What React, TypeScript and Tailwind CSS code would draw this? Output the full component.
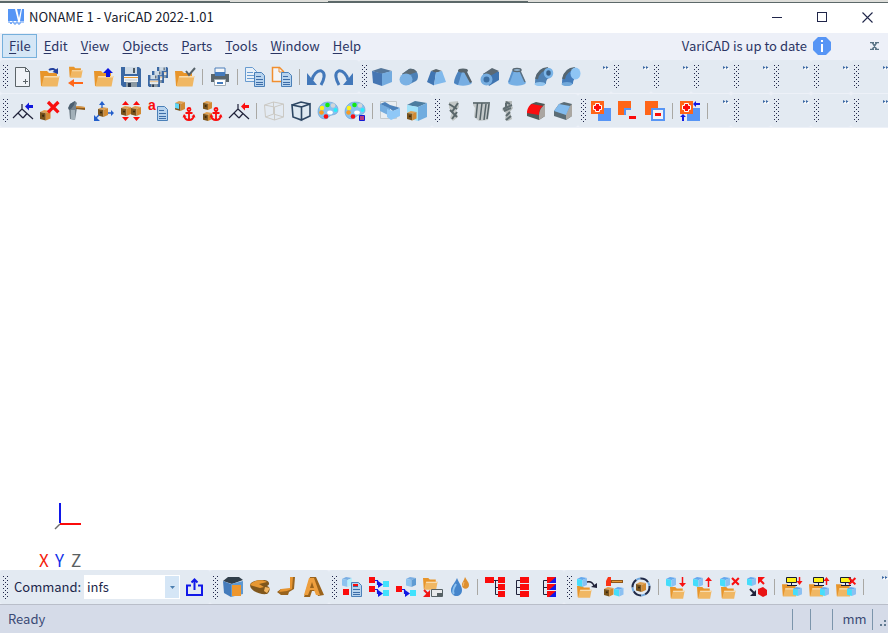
import type { ReactNode } from "react";

function Svg({ children, size = 20 }: { children: ReactNode; size?: number }) {
  return (
    <svg width={size} height={size} viewBox="0 0 20 20" fill="none" aria-hidden="true" className="shrink-0 overflow-visible">
      {children}
    </svg>
  );
}

// ---- shared glyph parts ----

type PartProps = { x?: number; y?: number; s?: number };

function Folder({ x = 0, y = 0, s = 1 }: PartProps) {
  return (
    <g transform={`translate(${x} ${y}) scale(${s})`}>
      <path d="M0 4h7l2 2h8v5H5l-3 8H1z" fill="#e8952a" />
      <path d="M4 9h15.5l-2 10.5H1.5z" fill="#f0b763" />
      <path d="M4.300 9h15L19 10.500H4z" fill="#f8dcae" />
    </g>
  );
}

function Cube({ x = 0, y = 0, s = 1, top = "#64a8ee", left = "#45ddfb", right = "#8bc0f2" }: PartProps & { top?: string; left?: string; right?: string }) {
  return (
    <g transform={`translate(${x} ${y}) scale(${s})`}>
      <path d="M0 2l4-2 6 1-4.500 2z" fill={top} />
      <path d="M0 2l5.500 1v7L0 8.500z" fill={left} />
      <path d="M5.500 3L10 1v7l-4.500 2z" fill={right} />
    </g>
  );
}

function Crate({ x = 0, y = 0, s = 1 }: PartProps) {
  return (
    <g>
      <Cube x={x} y={y} s={s} top="#e0a050" left="#7a541c" right="#d18a32" />
      <circle cx={x + 3 * s} cy={y + 5.5 * s} r={1.1 * s} fill="#3a2a12" />
    </g>
  );
}

function Sheet({ x = 0, y = 0 }: PartProps) {
  return (
    <g transform={`translate(${x} ${y})`}>
      <path d="M.5.5h7l3 3v11H.5z" fill="#b7d3ee" stroke="#4b80b8" />
      <path d="M2 4.500h5M2 7.500h7M2 10.500h7M2 12.500h7" stroke="#3d6da8" />
    </g>
  );
}

function Disk({ x = 0, y = 0, s = 1 }: PartProps) {
  return (
    <g transform={`translate(${x} ${y}) scale(${s})`}>
      <path d="M0 0h18l2 2v18H2l-2-2z" fill="#3b68a3" />
      <path d="M4 0h12v7H4z" fill="#cfdbe6" />
      <path d="M12 1h2v5h-2z" fill="#4c5963" />
      <path d="M3 9h14v6H3z" fill="#f2f4f5" />
      <path d="M3 10.500h14" stroke="#e89a36" />
      <path d="M4 13h12" stroke="#c3ccd3" />
      <path d="M5 15h11v5H5z" fill="#8d9aa3" />
      <path d="M7 16h3v4H7z" fill="#26364d" />
    </g>
  );
}

function Anchor() {
  return (
    <g stroke="#fa0d0d" strokeWidth="1.800">
      <circle cx="14" cy="8.500" r="1.500" />
      <path d="M14 10v9M10.500 12h7M9 14.500c.5 2.500 2 4.500 5 4.500s4.500-2 5-4.500" />
      <path d="M7.500 16.500L9 13l2.500 2.500zM20.500 16.500L19 13l-2.500 2.500z" fill="#fa0d0d" stroke="none" />
    </g>
  );
}

function Cross({ x = 0, y = 0, s = 1 }: PartProps) {
  return <path transform={`translate(${x} ${y}) scale(${s})`} d="M0 0l8 8M8 0L0 8" stroke="#f81010" strokeWidth="2.500" />;
}

function Branch({ color }: { color: string }) {
  return (
    <>
      <path d="M0 17L9 8V3M9 8l11 10M5 12l5 5M14 12.500L10 17" stroke="#20223a" strokeWidth="1.200" />
      <path d="M12 5.500l4-4V4h4v3h-4v2.500z" fill={color} />
    </>
  );
}

function Palette() {
  return (
    <>
      <path d="M10 1C4 1 0 6 0 10.500S3 19 9 17.500c2-1 2-3 5-3.500 4-.5 6-2 6-5C20 4 16 1 10 1z" fill="#86c1ef" stroke="#5794cd" strokeWidth=".5" />
      <circle cx="9.500" cy="4" r="2.300" fill="#12e912" />
      <circle cx="15" cy="4.500" r="2.300" fill="#d2d5d8" />
      <circle cx="4" cy="7" r="2.300" fill="#fff21a" />
      <circle cx="17.500" cy="9" r="2" fill="#27eefa" />
      <circle cx="3.500" cy="11.500" r="2.300" fill="#f79a25" />
      <circle cx="8" cy="15.500" r="2.300" fill="#f80f12" />
      <ellipse cx="12" cy="11.500" rx="2.800" ry="2" fill="#fff" />
    </>
  );
}

function Screen() {
  return (
    <>
      <Folder y={4} s={0.8} />
      <path d="M4.500.5h10v5h-10z" fill="#fff516" stroke="#191c33" />
      <path d="M9.500 6v2M5 8.500h10" stroke="#191c33" />
      <Cube x={11} y={10} s={0.9} />
    </>
  );
}

function Link({ x = 0, y = 0 }: PartProps) {
  return (
    <g transform={`translate(${x} ${y})`}>
      <path d="M0 0h6v6H0z" fill="#fb0b0b" />
      <path d="M14 4h6v6h-6z" fill="#40e2fd" />
      <path d="M6 3.500h2.500v4H11" stroke="#1018e4" strokeWidth="1.200" />
      <path d="M9 4l5 3.500L9 11z" fill="#1018e4" />
    </g>
  );
}

// ---- icons ----

const icons: Record<string, ReactNode> = {
  New: (
    <>
      <path d="M2.500.5h10l4 4v15h-14z" fill="#f0f3f7" stroke="#5c6468" />
      <path d="M12.500.5v4h4M12.500 12v5M10 14.500h5" stroke="#5c6468" />
    </>
  ),
  Open: (
    <>
      <Folder />
      <path d="M9 3c3-2 6-1 7 1.500" stroke="#23409d" strokeWidth="2" />
      <path d="M12.500 5L18 1v6z" fill="#23409d" />
    </>
  ),
  Close: (
    <>
      <Folder x={2} y={-3} s={0.7} />
      <path d="M6 16h10" stroke="#ff6718" strokeWidth="2" />
      <path d="M1 16l6-4v8z" fill="#ff6718" />
    </>
  ),
  "Open recent": (
    <>
      <Folder />
      <path d="M14 1l5 5h-3v4h-4V6H9z" fill="#0c12dd" />
    </>
  ),
  Save: <Disk />,
  "Save all": (
    <>
      <Disk x={9} y={0} s={0.55} />
      <Disk x={4} y={4} s={0.6} />
      <Disk x={0} y={8} s={0.6} />
    </>
  ),
  "Check in": (
    <>
      <Folder />
      <path d="M11 4l3 4 6-7" stroke="#57636a" strokeWidth="2" />
    </>
  ),
  Print: (
    <>
      <path d="M5 1h10v6H5z" fill="#f4f6f8" stroke="#4d7fba" />
      <path d="M1 7h18v8H1z" fill="#59656c" />
      <path d="M5 5h10v4H5z" fill="#447bbd" />
      <path d="M4.500 12.500h11v6h-11z" fill="#fff" stroke="#a0acb4" />
      <path d="M7 15h6v2H7z" fill="#447bbd" />
    </>
  ),
  Copy: (
    <>
      <path d="M.5.5h7l4 4v10H.5z" fill="#e8f0f8" stroke="#689bd0" />
      <path d="M2 5.500h6M2 8.500h7M2 11.500h7" stroke="#689bd0" />
      <Sheet x={9} y={5} />
    </>
  ),
  Paste: (
    <>
      <path d="M.5.5h7l4 4v10H.5z" fill="#f4f5f7" stroke="#f18e2e" strokeWidth="1.500" />
      <path d="M7 1v4h4" stroke="#f18e2e" />
      <Sheet x={9} y={5} />
    </>
  ),
  Undo: (
    <>
      <path d="M5 13c1-5 5-10 9.500-9 4.500 2 2.500 9-.5 14" stroke="#4278ba" strokeWidth="3" />
      <path d="M0 6v12h10z" fill="#4278ba" />
    </>
  ),
  Redo: (
    <>
      <path d="M14 13C13 8 9 3 4.500 4 0 6 2 13 5 18" stroke="#4278ba" strokeWidth="3" />
      <path d="M19 6v12H9z" fill="#4278ba" />
    </>
  ),
  Box: (
    <>
      <path d="M0 4l9-3 11 3-10 3z" fill="#55779a" />
      <path d="M0 4l10 2.500V19L1 16z" fill="#4576b3" />
      <path d="M10 6.500L20 4v11l-10 4z" fill="#73abdf" />
    </>
  ),
  Cylinder: (
    <>
      <path d="M3 7l7-5c4-1 9 2 9 7 0 3-1 4-2 5l-8 4z" fill="#4c80b6" />
      <path d="M3 7l7-5c3-1 6 0 8 3L9 8z" fill="#5c6b75" />
      <ellipse cx="7" cy="12.500" rx="6.500" ry="6" fill="#7ab1e4" />
    </>
  ),
  Pyramid: (
    <>
      <path d="M5 4l5-2 6 2-7 2z" fill="#58656d" />
      <path d="M5 4l5 1.500-2 13L1 15z" fill="#4075b2" />
      <path d="M10 5.500l6-1.500 4 11-12 3z" fill="#80b9ec" />
    </>
  ),
  Cone: (
    <>
      <path d="M6 3h7l6 13c-3 3.500-15 3.500-18 0z" fill="#76ade2" />
      <path d="M6 3C3 8 1 12 1 16l4 2L9 5z" fill="#4c83be" />
      <path d="M13 3l6 12-2 1-6-11z" fill="#55626b" />
      <ellipse cx="10" cy="3.500" rx="5" ry="2" fill="#58656d" />
    </>
  ),
  Pipe: (
    <>
      <path d="M3 7l9-5 7 3v8l-10 6z" fill="#3f74b0" />
      <path d="M3 7l9-6 7 3-9 5z" fill="#5b6974" />
      <circle cx="6.500" cy="12.500" r="4.500" stroke="#76ade0" strokeWidth="3" fill="#3b6ea3" />
    </>
  ),
  "Hollow cone": (
    <>
      <path d="M6 3h7l6 13c-3 3.500-15 3.500-18 0z" fill="#76afe4" />
      <path d="M6 4L2 15" stroke="#5b93cc" strokeWidth="2" />
      <path d="M13 4l5 11" stroke="#5b6f80" strokeWidth="1.500" />
      <ellipse cx="10" cy="3" rx="4" ry="1.500" fill="#a6cdee" stroke="#596873" strokeWidth="1.500" />
    </>
  ),
  Elbow: (
    <>
      <path d="M1 16C1 7 6 1 13 1l3 10c-3 0-4 3-4 6z" fill="#4e81b4" />
      <path d="M2.500 12C4 5 8 2 14 1.500" stroke="#566671" strokeWidth="3" />
      <ellipse cx="14.500" cy="6" rx="3.500" ry="4" fill="#385f87" stroke="#7bb5e8" strokeWidth="2.500" />
      <ellipse cx="6" cy="17" rx="5.500" ry="2" fill="#91c4ef" />
    </>
  ),
  "Solid elbow": (
    <>
      <path d="M1 16C1 7 6 1 13 1l3 10c-3 0-4 3-4 6z" fill="#447cba" />
      <path d="M2.500 12C4 5 8 2 14 1.500" stroke="#566671" strokeWidth="3" />
      <ellipse cx="14.500" cy="6.500" rx="5" ry="6" fill="#8ec5f4" />
      <ellipse cx="6" cy="17" rx="5.500" ry="2" fill="#71a8da" />
    </>
  ),

  "Insert part": <Branch color="#1017dc" />,
  "Delete solid": (
    <>
      <Crate x={0} y={9} s={1.05} />
      <Cross x={8} y={1} s={1.3} />
    </>
  ),
  "Edit solid": (
    <>
      <path d="M2 7l1-4 5-3 2 2-1 3 1 2-2 12-5-1z" fill="#75838d" />
      <path d="M4 9h4v10l-4-1z" fill="#a2b0b9" />
      <path d="M1 7l2-4 5-3-1 4-3 4-2 1z" fill="#4c5f70" />
      <path d="M9 5l9 1v3L9 8z" fill="#8d5b1d" />
      <path d="M9 5l9 1v1L9 6.500z" fill="#e8a04a" />
    </>
  ),
  Move: (
    <>
      <Crate x={4} y={6} />
      <path d="M8 7V2M14 12h4M5 14l-4 4" stroke="#225ecb" strokeWidth="1.300" />
      <path d="M5 4l3-4 3 4zM17 9l3 3-3 3zM0 14v6h6z" fill="#225ecb" />
    </>
  ),
  Spread: (
    <>
      <Crate x={0} y={5} />
      <Crate x={10} y={5} />
      <path d="M1 4l3.500-4L8 4zM12 4l3.500-4L19 4zM1 16h7l-3.500 4zM12 16h7l-3.500 4z" fill="#fb0b0b" />
    </>
  ),
  Attributes: (
    <>
      <Sheet x={9} y={5} />
      <text x="0" y="9" fill="#fb0b0b" fontSize="14" fontWeight="700" fontFamily="Liberation Sans, sans-serif">a</text>
    </>
  ),
  "Fix part": (
    <>
      <Crate x={0} y={0} />
      <path d="M0 2l4 1v5l-4-1z" fill="#60d6f5" />
      <Anchor />
    </>
  ),
  "Fix group": (
    <>
      <Crate x={1} y={0} s={0.9} />
      <Crate x={1} y={11} s={0.9} />
      <Anchor />
    </>
  ),
  "Remove part": <Branch color="#fb1010" />,
  Wireframe: <path d="M.5 4l10 2v13l-9-3zM10.500 6l9-3v13l-9 3M.5 4l9-3 10 2M9.500 1v12l10 3M9.500 13l-8 3" stroke="#cbc9c4" />,
  Edges: <path d="M1 4l9.500 2v13L2 16zM10.500 6L19 3v12l-8.500 4zM1 4l9-3 9 2" stroke="#2c4663" strokeWidth="1.600" fill="#dde8f1" />,
  Shading: <Palette />,
  "Shading settings": (
    <>
      <Palette />
      <path d="M14.500 14.500h5v5h-5z" fill="#ba3c80" stroke="#1218d5" />
    </>
  ),
  Section: (
    <>
      <path d="M.5.500h16v17H.5z" fill="#e9eef2" stroke="#c4cacd" />
      <path d="M0 3l10 4v8L0 10z" fill="#75addf" />
      <path d="M0 3l5-2 5 3 7 2 3 1-7 3-4-3z" fill="#4b81ba" />
      <path d="M7 8l6 2 7-3v8l-9 4-4-3z" fill="#8fc8f7" />
    </>
  ),
  Detail: (
    <>
      <Cube s={2} top="#4d7d9f" left="#a0e2fa" right="#70acdf" />
      <Crate x={0} y={10} s={0.95} />
    </>
  ),
  Drill: (
    <>
      <path d="M4 1l9-1 1 6-3 4 2 6-5 4-3-3 2-6-3-4z" fill="#c3c8c7" />
      <path d="M4 3l8 5M5 9l7 7M13 2l-6 9M12 11l-5 7" stroke="#59666a" strokeWidth="2" />
    </>
  ),
  Tap: (
    <>
      <path d="M1 1h17v6l-2 12-9 1-5-4 1-9-2-3z" fill="#c3c8c9" />
      <path d="M1 2h17M5.500 2L4 17M10 2L8 19M14 3l-2 16M17 3l-2 15" stroke="#566368" strokeWidth="1.500" />
    </>
  ),
  Counterbore: (
    <>
      <path d="M6 0h7v5l1 2-3 4 2 7-4 2-3-1 1-7-4-3 3-4z" fill="#b7bcbc" />
      <path d="M7 1l4 2M4 8l9-4M5 10l7-3M11 11l-4 4M12 15l-5 4M7 2v5" stroke="#5f6c70" strokeWidth="2" />
    </>
  ),
  Fillet: (
    <>
      <path d="M5 3l5-2 9 2v12l-6 4-12-4v-3z" fill="#4e5a58" />
      <path d="M13 14c0-4 2-7 4-9l2-2v12l-6 4z" fill="#aaa6a2" />
      <path d="M1 12c0-4 2-8 5-9l11 2c-3 2-4 5-4 9z" fill="#fb0e10" />
    </>
  ),
  Chamfer: (
    <>
      <path d="M6 3l5-2 8 2v12l-6 4-12-4v-5z" fill="#5b6c75" />
      <path d="M13 13l4-8 2-2v12l-6 4z" fill="#aaa7a2" />
      <path d="M6 3l11 2-4 9-12-4z" fill="#83bbed" />
    </>
  ),
  Union: (
    <>
      <path d="M7 7h13v13H7z" fill="#5795f5" />
      <path d="M0 0h13v13H0z" fill="#ff6518" />
      <path d="M4.500 2.500h4v2h2v4h-2v2h-4v-2h-2v-4h2z" fill="#fb0b0b" stroke="#fff" />
    </>
  ),
  Subtract: (
    <>
      <path d="M0 0h13v7H7v7H0z" fill="#ff6518" />
      <path d="M6 7h7v2H8v5H6z" fill="#5795f5" />
      <path d="M11 15h7v3h-7z" fill="#fb0b0b" />
    </>
  ),
  "Subtract keep": (
    <>
      <path d="M0 0h13v14H0z" fill="#ff6518" />
      <path d="M7 8h12v11H7z" fill="#f0f3f8" stroke="#5795f5" strokeWidth="2" />
      <path d="M10 12h6v3h-6z" fill="#fb0b0b" />
    </>
  ),
  "Union keep": (
    <>
      <path d="M7 7h13v13H7z" fill="#5795f5" />
      <path d="M0 0h13v13H0z" fill="#ff6518" />
      <path d="M4.500 2.500h4v2h2v4h-2v2h-4v-2h-2v-4h2z" fill="#fb0b0b" stroke="#fff" />
      <path d="M13 3l3-3v2h4v2h-4v2zM3 13l3 3H4v4H2v-4H0z" fill="#1018e4" />
    </>
  ),

  Extrude: (
    <>
      <path d="M0 4l5-4h11l4 3-11 4z" fill="#313f4b" />
      <path d="M0 4l8 3v13l-7-4z" fill="#447bbb" />
      <path d="M8 7l12-3v13L8 20z" fill="#5d98d2" />
      <path d="M9 8h9v11H9z" fill="#ed962d" />
    </>
  ),
  Revolve: (
    <>
      <path d="M0 8c0-3 6-5 13-5 6 0 8 4 4 6 4 1 3 6 0 8C10 18 0 14 0 8z" fill="#80571c" />
      <path d="M0 8c3-5 13-6 17-3l-8 2 5 3-4 1-7-2z" fill="#e79833" />
      <path d="M15 10l5 1-3 5-3-2z" fill="#f1b663" />
    </>
  ),
  Sweep: (
    <>
      <path d="M13 0h5l-1 12-5 3-1 3H4l-4-3 4-3h9z" fill="#99641e" />
      <path d="M13 0h3l-1 12-5 2-8 1 2-3 9-1z" fill="#e69430" />
    </>
  ),
  "Solid text": (
    <>
      <path d="M6 0h6l8 18-6 1-2-5H8l-2 6H0z" fill="#9b631b" />
      <path d="M5 1h5l6 17h-4l-2-5H6l-2 5H0zM8 5l-2 6h4z" fill="#ee9f3e" />
    </>
  ),
  Properties: (
    <>
      <Cube x={0} y={0} top="#7aaee3" left="#8dc3ef" right="#b7effa" />
      <path d="M1 12h6v6H1z" fill="#fb0b0b" />
      <Sheet x={9} y={5} />
      <path d="M11 7h5v2h-5z" fill="#fb0b0b" />
    </>
  ),
  "Replace links": (
    <>
      <Link />
      <Link y={9} />
    </>
  ),
  "Replace part": (
    <>
      <Link y={9} />
      <Cube x={10} y={0} top="#7aaee3" left="#8dc3ef" right="#5e9bd3" />
    </>
  ),
  "Export part": (
    <>
      <Folder x={0} y={-2} s={0.75} />
      <path d="M1 13l5 5" stroke="#f11616" strokeWidth="2" />
      <path d="M7 13v7H0z" fill="#f11616" />
      <path d="M8.500 12.500h11v7h-11z" fill="#e7e9eb" stroke="#566165" />
      <path d="M14 16h5v3h-5z" fill="#566165" />
    </>
  ),
  Fluid: (
    <>
      <path d="M7 1c2 5 5 8 5 12 0 8-11 8-11 0C1 9 5 6 7 1z" fill="#4585cb" />
      <path d="M6 7c-3 5-4 8-2 10" stroke="#8bc1f0" strokeWidth="2" />
      <path d="M15 0c2 4 4 5 4 8 0 5-7 5-7 0 0-3 2-4 3-8z" fill="#de902f" />
      <path d="M14 5l-1 4" stroke="#f4bc74" />
    </>
  ),
  "Tree all": (
    <>
      <path d="M0 0h9v6H0zM13 0h7v6h-7zM13 7h7v6h-7zM13 14h7v6h-7z" fill="#fb0b0b" />
      <path d="M9 3.500h4M10.500 3v14.500H13M10.500 10.500H13" stroke="#20223a" />
    </>
  ),
  "Tree parts": (
    <>
      <path d="M8 0h9v6H8zM8 7h9v6H8zM8 14h9v6H8z" fill="#fb0b0b" />
      <path d="M8 3.500H4.500v14H8M4.500 10.500H8" stroke="#20223a" />
    </>
  ),
  "Tree compare": (
    <>
      <path d="M8 0h9v6H8zM8 7h9v6H8zM8 14h9v6H8z" fill="#fb0b0b" />
      <path d="M17 0v6h-7zM17 7v6h-7zM17 14v6h-7z" fill="#1118e8" />
      <path d="M8 3.500H4.500v14H8M4.500 10.500H8" stroke="#20223a" />
    </>
  ),
  "Load part": (
    <>
      <Folder y={6} s={0.75} />
      <Cube />
      <path d="M10 5c4-1 6 1 7 4" stroke="#20223a" strokeWidth="1.500" />
      <path d="M14 10l6-4v5z" fill="#20223a" />
    </>
  ),
  Rebuild: (
    <>
      <path d="M4 0h3v9H2V4z" fill="#fb3416" />
      <path d="M7 3h12v3H7z" fill="#8f561b" />
      <path d="M8 4.500h10" stroke="#e89a36" />
      <Crate x={0} y={10} s={0.95} />
      <Cube x={10} y={10} s={0.95} />
    </>
  ),
  Refresh: (
    <>
      <circle cx="10" cy="10" r="8.500" stroke="#202a48" strokeWidth="2" strokeDasharray="9 4" />
      <circle cx="10" cy="10" r="8.500" stroke="#71a9df" strokeWidth="2" strokeDasharray="4 9" strokeDashoffset="4" />
      <Crate x={5} y={5} />
    </>
  ),
  "Import part": (
    <>
      <Folder x={4} y={7} s={0.75} />
      <Cube />
      <path d="M16.500 0v7" stroke="#f81010" strokeWidth="1.500" />
      <path d="M13 6h7l-3.500 4z" fill="#f81010" />
    </>
  ),
  "Store part": (
    <>
      <Folder x={4} y={7} s={0.75} />
      <Cube />
      <path d="M15.500 3v7" stroke="#f81010" strokeWidth="1.500" />
      <path d="M12 4h7l-3.500-4z" fill="#f81010" />
    </>
  ),
  "Remove stored": (
    <>
      <Folder x={1} y={7} s={0.75} />
      <Cube />
      <Cross x={12} y={1} s={0.85} />
    </>
  ),
  Swap: (
    <>
      <Cube s={0.9} />
      <path d="M17 7l-5-5" stroke="#f81010" strokeWidth="2" />
      <path d="M11 0h7l-7 7z" fill="#f81010" />
      <path d="M3 12l5 5" stroke="#20223a" strokeWidth="2" />
      <path d="M9 13v6H3z" fill="#20223a" />
      <path d="M11 12l5-2 4 3v5l-4 2-5-3z" fill="#e81414" />
    </>
  ),
  "Load view": (
    <>
      <Screen />
      <path d="M17.500 0v5" stroke="#f81010" strokeWidth="1.500" />
      <path d="M14.500 4h6l-3 4z" fill="#f81010" />
    </>
  ),
  "Store view": (
    <>
      <Screen />
      <path d="M17.500 3v5" stroke="#f81010" strokeWidth="1.500" />
      <path d="M14.500 4h6l-3-4z" fill="#f81010" />
    </>
  ),
  "Remove view": (
    <>
      <Screen />
      <Cross x={13} y={1} s={0.8} />
    </>
  ),
};

// ---- toolbar pieces ----

const gripRows = [0, 4, 8, 12, 16, 20];

function Grip() {
  return (
    <div className="flex w-[10px] shrink-0 items-center justify-center">
      <svg width="5" height="23" viewBox="0 0 5 23" fill="#20264a" shapeRendering="crispEdges" aria-hidden="true">
        {gripRows.map((y) => (
          <path key={y} d={`M0 ${y}h1v1H0zM4 ${y}h1v1H4zM2 ${y + 2}h1v1H2z`} />
        ))}
      </svg>
    </div>
  );
}

function Separator() {
  return (
    <div className="flex w-2 shrink-0 items-center justify-start pl-[3px]">
      <div className="h-4 w-px bg-[#a9a8a4]" />
    </div>
  );
}

function More() {
  return (
    <button aria-label="More tools" className="mt-[6px] ml-auto h-[5px] shrink-0">
      <svg width="6" height="5" viewBox="0 0 6 5" aria-hidden="true">
        <path d="M1 1.500h2v2H1zM4 1.500h2v2H4z" fill="#fff" />
        <path d="M0 0l2.500 1.500L0 3zM3 0l2.500 1.500L3 3z" fill="#3b68a3" />
      </svg>
    </button>
  );
}

function Tools({ groups }: { groups: string[][] }) {
  return (
    <>
      {groups.map((names, i) => (
        <div key={i} className="flex shrink-0">
          {i > 0 && <Separator />}
          {names.map((name) => (
            <button key={name} aria-label={name} title={name} className="flex w-[27px] items-center pl-[3px]">
              <Svg>{icons[name]}</Svg>
            </button>
          ))}
        </div>
      ))}
    </>
  );
}

function Bar({ children, className = "" }: { children?: ReactNode; className?: string }) {
  return (
    <div role="toolbar" className={`flex shrink-0 rounded-[3px] bg-[#e3eaf2] ${className}`}>
      <Grip />
      {children}
    </div>
  );
}

function Collapsed({ count }: { count: number }) {
  return (
    <>
      {Array.from({ length: count }, (_, i) => (
        <Bar key={i} className="w-10 pr-[2px]">
          <More />
        </Bar>
      ))}
    </>
  );
}

const menus = ["File", "Edit", "View", "Objects", "Parts", "Tools", "Window", "Help"];

export default function App() {
  return (
    <div className="flex min-h-screen flex-col overflow-hidden bg-white font-['Noto_Sans_CJK_SC','Noto_Sans',sans-serif] text-[13px] leading-5 text-[#2b3564]">
      <div className="flex h-[3px] border-b border-[#5c6869] bg-[#dededa]">
        <div className="w-[230px] border-b border-[#5c6869]" />
        <div className="ml-[98px] w-[200px] border-b border-[#5c6869]" />
      </div>

      <header className="flex h-[30px] items-center">
        <svg width="16" height="16" viewBox="0 0 16 16" className="mb-[2px] ml-2 shrink-0" aria-hidden="true">
          <path d="M0 0h16v12H0z" fill="#5595f5" />
          <path d="M7 0h2l2 9 2-9h1l-2 12h-2z" fill="#fff" />
          <path d="M0 13h2l1 2 1-2h2v2h2v-2h2v2h2v-2h4" stroke="#5595f5" fill="none" />
        </svg>
        <h1 className="mb-[2px] ml-[5px] text-[#171a2c]">NONAME 1 - VariCAD 2022-1.01</h1>
        <div className="ml-auto flex h-full pb-[2px]">
          <button aria-label="Minimize" className="flex w-10 items-center justify-center">
            <span className="h-px w-[10px] bg-[#20264a]" />
          </button>
          <button aria-label="Maximize" className="flex w-[50px] items-center justify-center">
            <span className="size-[10px] border border-[#20264a]" />
          </button>
          <button aria-label="Close window" className="flex w-[41px] items-center justify-center">
            <svg width="11" height="11" viewBox="0 0 11 11" stroke="#20264a" strokeWidth="1.100" aria-hidden="true">
              <path d="M.5.5l10 10M10.500.5l-10 10" />
            </svg>
          </button>
        </div>
      </header>

      <nav className="flex h-[27px] items-center bg-[#edf0f8] pr-[9px] pb-[2px] pl-[2px]">
        {menus.map((name, i) => (
          <button
            key={name}
            className={i === 0 ? "h-6 border border-[#76b0dc] bg-[#d5e6f6] pr-[5px] pl-[6px]" : "h-6 pr-[6px] pl-[7px]"}
          >
            <span className="underline underline-offset-2">{name[0]}</span>
            {name.slice(1)}
          </button>
        ))}
        <span className="ml-auto">VariCAD is up to date</span>
        <button aria-label="Update information" className="ml-[6px]">
          <svg width="18" height="18" viewBox="0 0 18 18" aria-hidden="true">
            <path d="M5 0h8l5 5v8l-5 5H5l-5-5V5z" fill="#5795f5" />
            <path d="M8 3h2v2H8zM8 7h2v8H8z" fill="#fff" />
          </svg>
        </button>
        <button aria-label="Close document" className="ml-[39px]">
          <svg width="9" height="8" viewBox="0 0 9 8" aria-hidden="true">
            <path d="M0 .5h4M5 .5h4M0 7.500h4M5 7.500h4M2 0l5 8M7 0L2 8" stroke="#597385" strokeWidth="1.500" />
          </svg>
        </button>
      </nav>

      <div className="bg-[#edf1f8]">
        <div className="flex h-[34px] overflow-hidden pb-px">
          <Bar className="w-[359px]">
            <Tools
              groups={[
                ["New", "Open", "Close", "Open recent", "Save", "Save all", "Check in"],
                ["Print"],
                ["Copy", "Paste"],
                ["Undo", "Redo"],
              ]}
            />
          </Bar>
          <Bar className="w-[252px] pr-[2px]">
            <Tools groups={[["Box", "Cylinder", "Pyramid", "Cone", "Pipe", "Hollow cone", "Elbow", "Solid elbow"]]} />
            <More />
          </Bar>
          <Collapsed count={7} />
        </div>
        <div className="flex h-[34px] overflow-hidden pb-px">
          <Bar className="w-[432px]">
            <Tools
              groups={[
                ["Insert part", "Delete solid", "Edit solid", "Move", "Spread", "Attributes", "Fix part", "Fix group", "Remove part"],
                ["Wireframe", "Edges", "Shading", "Shading settings"],
                ["Section", "Detail"],
              ]}
            />
          </Bar>
          <Bar className="w-[146px]">
            <Tools groups={[["Drill", "Tap", "Counterbore", "Fillet", "Chamfer"]]} />
          </Bar>
          <Bar className="w-[153px] pr-[2px]">
            <Tools groups={[["Union", "Subtract", "Subtract keep"], ["Union keep"]]} />
            <Separator />
            <More />
          </Bar>
          <Collapsed count={4} />
        </div>
      </div>

      <main className="flex flex-1 flex-col justify-end bg-white pl-[39px]">
        <svg width="28" height="27" viewBox="0 0 28 27" className="ml-[15px]" fill="none" aria-hidden="true">
          <path d="M6 21l-5 5" stroke="#6c6c6c" strokeWidth="1.500" />
          <path d="M6 20V0" stroke="#1118e8" strokeWidth="2" />
          <path d="M6 21h21" stroke="#fb0b0b" strokeWidth="2" />
        </svg>
        <div className="mt-5 flex text-[17px] leading-5">
          <span className="w-4 text-[#f5220c]">X</span>
          <span className="w-4 text-[#1130e8]">Y</span>
          <span className="w-4 text-[#5a6062]">Z</span>
        </div>
      </main>

      <div className="flex h-[34px] overflow-hidden bg-[#edf1f8]">
        <Bar className="w-[210px] items-center">
          <label htmlFor="command" className="ml-1 w-[70px] text-[#20264a]">Command:</label>
          <div className="flex h-6 w-24 bg-white p-px">
            <input id="command" defaultValue="infs" className="w-20 min-w-0 bg-transparent pl-[2px] text-[#20264a] outline-none" />
            <button aria-label="Command history" className="flex flex-1 items-center justify-center bg-[#d5e6f6]">
              <svg width="5" height="3" viewBox="0 0 5 3" fill="#4c7fb0" aria-hidden="true">
                <path d="M0 0h5L2.500 3z" />
              </svg>
            </button>
          </div>
          <button aria-label="Run command" className="ml-[5px]">
            <Svg>
              <path d="M6 8.500H2v9.500h15V8.500h-4M9.500 13V3M6.500 5.500l3-3 3 3" stroke="#1118e8" strokeWidth="2" />
            </Svg>
          </button>
        </Bar>
        <Bar className="w-[119px]">
          <Tools groups={[["Extrude", "Revolve", "Sweep", "Solid text"]]} />
        </Bar>
        <Bar className="w-[235px]">
          <Tools
            groups={[
              ["Properties", "Replace links", "Replace part", "Export part", "Fluid"],
              ["Tree all", "Tree parts", "Tree compare"],
            ]}
          />
        </Bar>
        <div role="toolbar" className="flex flex-1 rounded-[3px] bg-[#e3eaf2]">
          <Grip />
          <Tools
            groups={[
              ["Load part", "Rebuild", "Refresh"],
              ["Import part", "Store part", "Remove stored", "Swap"],
              ["Load view", "Store view", "Remove view"],
            ]}
          />
          <Separator />
          <More />
        </div>
      </div>

      <footer className="flex h-[29px] items-center border-t border-[#b9bec9] bg-[#d5dbe8] pl-2 text-[#3a4a75]">
        <span>Ready</span>
        <div className="ml-auto flex h-[21px] items-center">
          <div className="h-full w-[18px] border-l border-[#7c95ab]" />
          <div className="h-full w-[22px] border-l border-[#7c95ab]" />
          <div className="flex h-full w-[41px] items-center justify-center border-x border-[#7c95ab] pl-1">mm</div>
        </div>
        <svg width="15" height="20" viewBox="0 0 15 20" fill="#627b91" aria-hidden="true">
          <path d="M11 11h2v2h-2zM7 15h2v2H7zM11 15h2v2h-2z" />
        </svg>
      </footer>
    </div>
  );
}
